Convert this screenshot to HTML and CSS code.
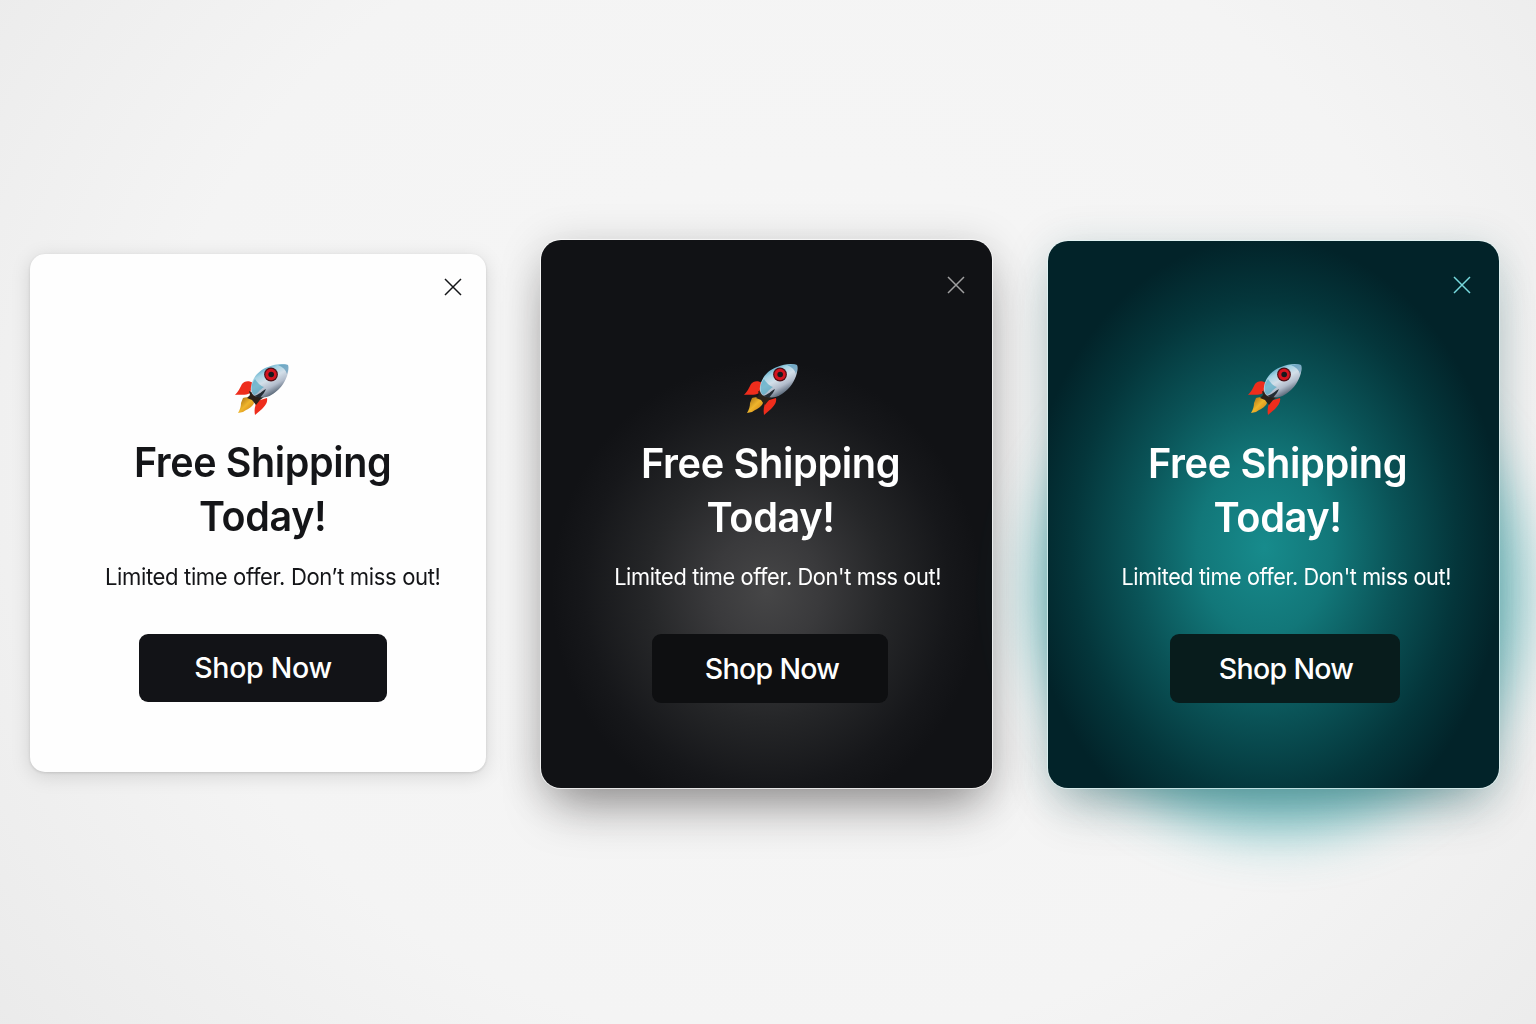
FILE: index.html
```html
<!DOCTYPE html>
<html lang="en">
<head>
<meta charset="utf-8">
<title>Free Shipping Popups</title>
<link rel="stylesheet" href="styles.css">
</head>
<body>
<svg class="defs" aria-hidden="true">
  <defs>
    <linearGradient id="hull" x1="25" y1="6" x2="39" y2="32" gradientUnits="userSpaceOnUse">
      <stop offset="0" stop-color="#4a9fc0"/><stop offset=".25" stop-color="#a5d3e4"/><stop offset=".5" stop-color="#d3dfe9"/><stop offset=".75" stop-color="#b2bccb"/><stop offset="1" stop-color="#5d6b7b"/>
    </linearGradient>
    <linearGradient id="flame" x1="0" y1="0" x2="1" y2="1">
      <stop offset="0" stop-color="#9a6512"/><stop offset=".5" stop-color="#efb52b"/><stop offset="1" stop-color="#c97512"/>
    </linearGradient>
    <symbol id="rocket" viewBox="0 0 56 54">
      <path d="M19 21C15 18 10 19 8 22C6 26 4 30 1 33C6 32 11 34 16 31Z" fill="#ee2d1c"/>
      <path d="M33 36C34 40 31 44 28 47L21 53C20 48 21 43 23 39Z" fill="#ee2d1c"/>
      <path d="M9 36C14 34 19 36 20 41C18 46 13 47 9 50L4 51C6 48 7 44 7 41Z" fill="url(#flame)"/>
      <path d="M15 29L30 35L26 38L22 43L18 38L13 36L16 33Z" fill="#2b2119"/>
      <path d="M54 3C56 8 52 20 45 27C40 32 33 37 25 35C19 35 16 30 17 25C18 16 25 8 34 5C41 2 49 1 54 3Z" fill="url(#hull)"/>
      <path d="M21 17C17 22 16 29 20 33C24 32 25 28 30 25C26 24 23 20 21 17Z" fill="#4ba6c1" opacity=".65"/>
      <path d="M44 3C48 2 52 2 54 3C55 6 54 9 53 12C52 8 49 5 44 3Z" fill="#2f7ca6" opacity=".5"/>
      <path d="M20 34C25 33 28 29 32 27C31 30 29 32 26 36Z" fill="#232b33"/>
      <circle cx="37" cy="12.5" r="6.9" fill="#4d1116"/>
      <circle cx="37" cy="12.5" r="5.7" fill="#d5141f"/>
      <circle cx="37.2" cy="12.5" r="2.8" fill="#17191d"/>
    </symbol>
    <symbol id="close" viewBox="0 0 18 18"><path d="M1 1L17 17M17 1L1 17" fill="none" stroke="currentColor" stroke-width="1.5"/></symbol>
  </defs>
</svg>
<main class="stage">
  <section class="card light">
    <button class="close" aria-label="Close"><svg><use href="#close"/></svg></button>
    <svg class="rocket"><use href="#rocket"/></svg>
    <h2 class="title">Free Shipping<br>Today!</h2>
    <p class="text">Limited time offer. Don’t miss out!</p>
    <button class="cta">Shop Now</button>
  </section>
  <section class="card dark">
    <button class="close" aria-label="Close"><svg><use href="#close"/></svg></button>
    <svg class="rocket"><use href="#rocket"/></svg>
    <h2 class="title">Free Shipping<br>Today!</h2>
    <p class="text">Limited time offer. Don't mss out!</p>
    <button class="cta">Shop Now</button>
  </section>
  <div class="glow">
    <section class="card teal">
      <button class="close" aria-label="Close"><svg><use href="#close"/></svg></button>
      <svg class="rocket"><use href="#rocket"/></svg>
      <h2 class="title">Free Shipping<br>Today!</h2>
      <p class="text">Limited time offer. Don't miss out!</p>
      <button class="cta">Shop Now</button>
    </section>
  </div>
</main>
</body>
</html>
```

FILE: styles.css
```css
* { box-sizing: border-box; }
body {
  margin: 0;
  font-family: Inter, "Liberation Sans", sans-serif;
  background: radial-gradient(ellipse 70% 95% at 52% 45%, #f6f6f6 0%, #f4f4f4 60%, #e9e9e9 100%);
}
.defs { position: absolute; width: 0; height: 0; }
.stage {
  width: 1536px;
  height: 1024px;
  padding: 240px 36px 0 30px;
  display: grid;
  grid-template-columns: 456px 451px 452px;
  column-gap: 55px;
  align-items: start;
  overflow: hidden;
}
.card {
  height: 548px;
  padding: 36px 27px 0 0;
  border-radius: 20px;
  display: flex;
  flex-direction: column;
  align-items: center;
}
.close {
  align-self: flex-end;
  width: 18px;
  height: 18px;
  padding: 0;
  border: 0;
  background: none;
  color: inherit;
}
.close svg { display: block; width: 18px; height: 18px; }
.rocket { display: block; width: 56px; height: 54px; margin-top: 68px; flex: none; }
.title {
  margin: 20px 0 0;
  font-size: 41px;
  line-height: 54px;
  font-weight: 600;
  letter-spacing: -0.4px;
  text-align: center;
  white-space: nowrap;
  transform: scaleX(.97);
}
.text {
  margin: 17px 0 0;
  font-size: 23px;
  line-height: 32px;
  letter-spacing: -0.4px;
  white-space: nowrap;
}
.cta {
  height: 69px;
  margin-top: 41px;
  padding: 0;
  border: 0;
  border-radius: 9px;
  color: #fff;
  font: 500 28.5px/68px Inter, "Liberation Sans", sans-serif;
  letter-spacing: -0.65px;
  flex: none;
}

.light {
  height: 518px;
  margin-top: 14px;
  padding: 24px 24px 0 0;
  border-radius: 15px;
  background: #fefefe;
  color: #141518;
  box-shadow: 0 1px 3px rgba(0, 0, 0, .12), 0 4px 20px rgba(0, 0, 0, .13);
}
.light .rocket { margin-top: 66px; margin-left: 32px; }
.light .title { margin-top: 19px; margin-left: 34px; transform: scaleX(.963); }
.light .text { margin-top: 18px; margin-left: 53px; transform: scaleX(.96); }
.light .cta { width: 248px; height: 68px; margin-left: 34px; background: #121317; letter-spacing: -0.3px; }

.dark {
  background: radial-gradient(ellipse 215px 230px at 50% 64%, #464647 0%, #3a3a3c 25%, #252628 56%, #16171a 85%, #111215 100%);
  color: #fff;
  box-shadow: 0 0 0 1px rgba(255, 255, 255, .7), 0 30px 50px -14px rgba(25, 20, 22, .38), 0 6px 44px rgba(0, 0, 0, .18);
}
.dark .close { color: #a0a0a1; }
.dark .rocket { margin-left: 36px; }
.dark .title { margin-left: 35px; }
.dark .text { margin-left: 49px; transform: scaleX(.947); }
.dark .cta { width: 236px; margin-left: 33px; padding-left: 5px; background: #0e0f11; }

.glow {
  position: relative;
  z-index: 0;
  padding: 1px 0 0 1px;
}
.glow::before {
  content: "";
  position: absolute;
  z-index: -1;
  inset: 110px -22px -44px -10px;
  border-radius: 50%;
  background: #2da9ad;
  opacity: .58;
  filter: blur(28px);
}
.teal {
  height: 547px;
  padding-top: 35px;
  padding-right: 28px;
  background: radial-gradient(ellipse 240px 310px at 48% 56%, #178b8c 0%, #127779 28%, #0a5357 55%, #04363b 80%, #022329 100%);
  color: #fff;
  box-shadow: 0 0 0 1px rgba(225, 248, 248, .7), 0 30px 50px -14px rgba(20, 65, 70, .3), 0 6px 44px rgba(0, 80, 85, .18);
}
.teal .close { color: #78d9dd; }
.teal .rocket { margin-left: 30px; }
.teal .title { margin-left: 36px; }
.teal .text { margin-left: 54px; transform: scaleX(.94); }
.teal .cta { width: 230px; margin-left: 51px; padding-left: 2px; background: #081c1c; }
```
